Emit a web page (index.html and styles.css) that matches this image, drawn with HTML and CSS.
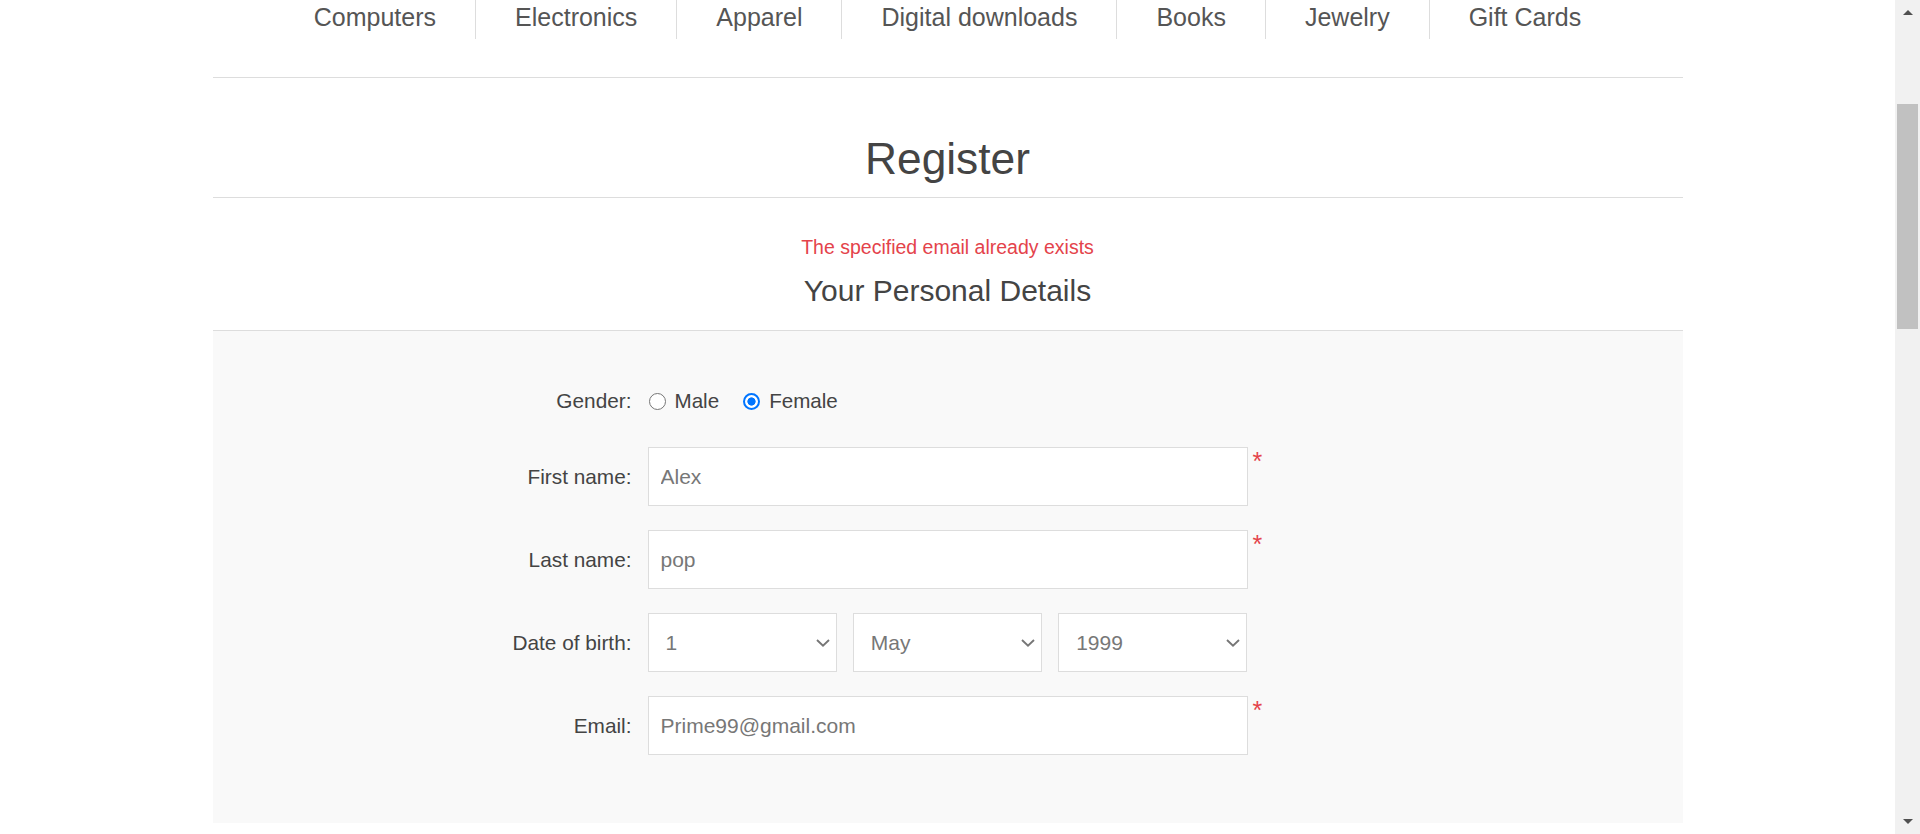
FILE: index.html
```html
<!DOCTYPE html>
<html lang="en">
<head>
<meta charset="utf-8">
<title>Register</title>
<link rel="stylesheet" href="styles.css">
</head>
<body>
<div class="viewport">
  <div class="page">
    <div class="container">
      <nav class="menu">
        <ul>
          <li>Computers</li>
          <li>Electronics</li>
          <li>Apparel</li>
          <li>Digital downloads</li>
          <li>Books</li>
          <li>Jewelry</li>
          <li>Gift Cards</li>
        </ul>
      </nav>
      <div class="page-title"><h1>Register</h1></div>
      <div class="message-error">The specified email already exists</div>
      <div class="fieldset">
        <div class="title">Your Personal Details</div>
        <div class="form-fields">
          <div class="inputs gender-row">
            <label class="field-label">Gender:</label>
            <div class="radio-group">
              <input type="radio" name="gender" id="g-m" class="radio">
              <label for="g-m" class="radio-label">Male</label>
              <input type="radio" name="gender" id="g-f" class="radio" checked>
              <label for="g-f" class="radio-label">Female</label>
            </div>
          </div>
          <div class="inputs">
            <label class="field-label" for="fn">First name:</label>
            <input class="text-input" id="fn" type="text" value="Alex">
            <span class="required">*</span>
          </div>
          <div class="inputs">
            <label class="field-label" for="ln">Last name:</label>
            <input class="text-input" id="ln" type="text" value="pop">
            <span class="required">*</span>
          </div>
          <div class="inputs">
            <label class="field-label">Date of birth:</label>
            <div class="date-picker">
              <select class="select"><option>1</option></select>
              <select class="select"><option>May</option></select>
              <select class="select"><option>1999</option></select>
            </div>
          </div>
          <div class="inputs">
            <label class="field-label" for="em">Email:</label>
            <input class="text-input" id="em" type="email" value="Prime99@gmail.com">
            <span class="required">*</span>
          </div>
        </div>
      </div>
    </div>
  </div>
  <div class="scrollbar">
    <div class="sb-btn"><span class="arrow-up"></span></div>
    <div class="sb-track"><div class="sb-thumb"></div></div>
    <div class="sb-btn"><span class="arrow-down"></span></div>
  </div>
</div>
</body>
</html>
```

FILE: styles.css
```css
html, body {
  margin: 0;
  padding: 0;
  height: 834px;
  overflow: hidden;
}

body {
  font-family: "Liberation Sans", Arial, sans-serif;
  background: #fff;
  color: #444;
}

.viewport {
  display: flex;
  height: 834px;
}

.page {
  flex: 1;
  min-width: 0;
}

.container {
  width: 1470px;
  margin: 0 auto;
}

/* top menu */
.menu {
  border-bottom: 1px solid #ddd;
  padding-bottom: 38px;
}

.menu ul {
  display: flex;
  justify-content: center;
  list-style: none;
  margin: 0;
  padding: 0;
}

.menu li {
  height: 39px;
  line-height: 35px;
  padding: 0 39px;
  font-size: 25px;
  color: #555;
  white-space: nowrap;
}

.menu li + li {
  border-left: 1px solid #ddd;
}

/* title */
.page-title {
  padding: 58px 0 16px;
  border-bottom: 1px solid #ddd;
  text-align: center;
}

.page-title h1 {
  margin: 0;
  font-size: 44.3px;
  line-height: 45px;
  font-weight: normal;
  color: #444;
}

.message-error {
  margin-top: 37px;
  font-size: 19.5px;
  line-height: 24px;
  color: #e4434b;
  text-align: center;
}

.title {
  margin-top: 14px;
  padding-bottom: 21px;
  font-size: 30px;
  line-height: 36px;
  color: #444;
  text-align: center;
}

/* form */
.form-fields {
  border-top: 1px solid #ddd;
  background: #f9f9f9;
  padding: 48px 0 68px;
  display: flex;
  flex-direction: column;
  gap: 24px;
}

.inputs {
  display: flex;
  align-items: center;
}

.gender-row {
  height: 44px;
}

.field-label {
  width: 419px;
  margin-right: 16px;
  text-align: right;
  font-size: 20.8px;
  line-height: 24px;
  color: #444;
  flex-shrink: 0;
}

.radio-group {
  display: flex;
  align-items: center;
}

.radio {
  appearance: none;
  -webkit-appearance: none;
  width: 17px;
  height: 17px;
  margin: 0 0 0 1px;
  border: 1px solid #767676;
  border-radius: 50%;
  background: #fff;
  box-sizing: border-box;
}

.radio:checked {
  border: 2px solid #0075ff;
  background: radial-gradient(circle, #0075ff 0 3.8px, #fff 4.4px);
}

.radio-label {
  margin-left: 9px;
  margin-right: 23px;
  font-size: 20.6px;
  line-height: 24px;
  color: #444;
}

.text-input {
  box-sizing: border-box;
  width: 600px;
  height: 59px;
  margin: 0;
  padding: 0 12px;
  border: 1px solid #ddd;
  background: #fff;
  font-family: "Liberation Sans", Arial, sans-serif;
  font-size: 21px;
  color: #777;
  outline: none;
}

.required {
  align-self: flex-start;
  margin: 2px 0 0 5px;
  font-size: 25px;
  line-height: 25px;
  color: #e4434b;
}

.date-picker {
  width: 600px;
  display: grid;
  grid-template-columns: repeat(3, 1fr);
  column-gap: 16px;
}

.select {
  appearance: none;
  -webkit-appearance: none;
  box-sizing: border-box;
  width: 100%;
  height: 59px;
  margin: 0;
  padding: 0 30px 0 17px;
  border: 1px solid #ddd;
  border-radius: 0;
  background: #fff url("data:image/svg+xml,%3Csvg xmlns='http://www.w3.org/2000/svg' width='14' height='8' viewBox='0 0 14 8'%3E%3Cpath d='M1 1l6 5.6L13 1' fill='none' stroke='%23767676' stroke-width='1.9'/%3E%3C/svg%3E") no-repeat right 6px center;
  font-family: "Liberation Sans", Arial, sans-serif;
  font-size: 21px;
  color: #777;
  outline: none;
}

/* fake window scrollbar */
.scrollbar {
  width: 25px;
  flex-shrink: 0;
  background: #f1f1f1;
  display: flex;
  flex-direction: column;
}

.sb-btn {
  height: 25px;
  display: flex;
  align-items: center;
  justify-content: center;
}

.arrow-up {
  width: 0;
  height: 0;
  border-left: 5.5px solid transparent;
  border-right: 5.5px solid transparent;
  border-bottom: 5px solid #505050;
}

.arrow-down {
  width: 0;
  height: 0;
  border-left: 5.5px solid transparent;
  border-right: 5.5px solid transparent;
  border-top: 5px solid #505050;
}

.sb-track {
  flex: 1;
}

.sb-thumb {
  margin: 79px 2px 0;
  height: 225px;
  background: #c1c1c1;
}
```
